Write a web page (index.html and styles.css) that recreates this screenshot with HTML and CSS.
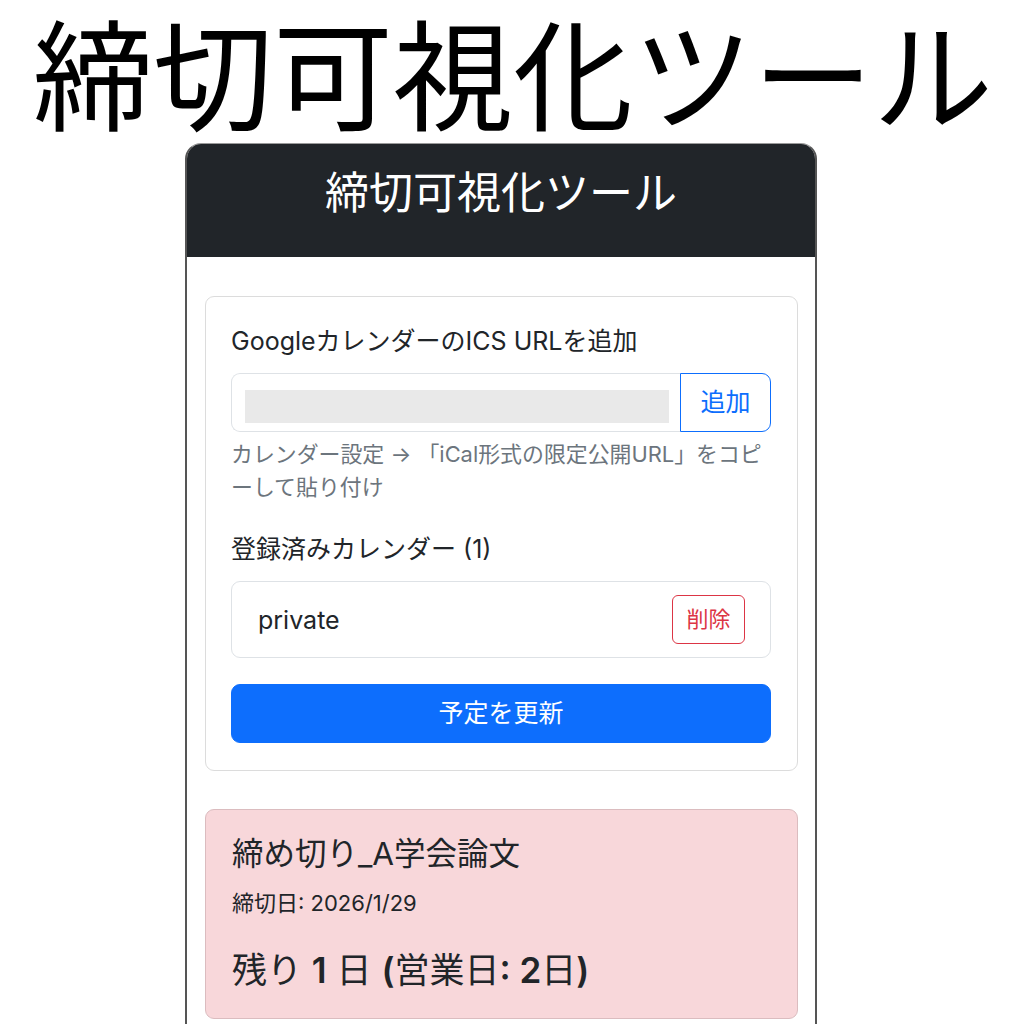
FILE: index.html
```html
<!DOCTYPE html>
<html lang="ja">
<head>
<meta charset="utf-8">
<title>締切可視化ツール</title>
<link rel="stylesheet" href="styles.css">
</head>
<body>
<h1 class="page-title">締切可視化ツール</h1>
<div class="phone">
  <header class="app-header">
    <h2 class="app-title">締切可視化ツール</h2>
  </header>
  <main class="app-main">
    <section class="card">
      <div class="card-body">
        <label class="form-label">GoogleカレンダーのICS URLを追加</label>
        <div class="input-group">
          <div class="form-control"><span class="redacted"></span></div>
          <button class="btn btn-outline-primary">追加</button>
        </div>
        <div class="form-text">カレンダー設定 → 「iCal形式の限定公開URL」をコピーして貼り付け</div>
        <h3 class="section-label">登録済みカレンダー (1)</h3>
        <ul class="list-group">
          <li class="list-item">
            <span class="cal-name">private</span>
            <button class="btn btn-sm btn-outline-danger">削除</button>
          </li>
        </ul>
        <button class="btn btn-primary btn-block">予定を更新</button>
      </div>
    </section>
    <section class="card card-danger">
      <div class="card-body">
        <h4 class="deadline-title">締め切り_A学会論文</h4>
        <p class="deadline-date">締切日: 2026/1/29</p>
        <p class="deadline-remaining">残り <b>1</b> 日 <b>(</b>営業日<b>: 2</b>日<b>)</b></p>
      </div>
    </section>
  </main>
</div>
</body>
</html>
```
FILE: styles.css
```css
* { box-sizing: border-box; }

html, body {
  margin: 0;
  padding: 0;
  height: 1024px;
  overflow: hidden;
  background: #ffffff;
}

body {
  font-family: Inter, "Noto Sans CJK JP", sans-serif;
  color: #212529;
}

.page-title {
  margin: 0;
  height: 143px;
  padding: 10px 0 0 33px;
  font-family: "Noto Sans CJK JP", sans-serif;
  font-weight: 400;
  font-size: 120px;
  line-height: 120px;
  color: #000;
  white-space: nowrap;
}

.phone {
  margin-left: 185px;
  width: 632px;
  height: 881px;
  border: 2px solid #555;
  border-top: 1px solid #9a9a9a;
  border-bottom: none;
  border-radius: 16px 16px 0 0;
  overflow: hidden;
  background: #fff;
}

.app-header {
  background: #212529;
  height: 113px;
  padding-top: 20px;
  text-align: center;
}

.app-title {
  margin: 0;
  color: #fff;
  font-family: "Noto Sans CJK JP", sans-serif;
  font-weight: 400;
  font-size: 44px;
  line-height: 1.2;
}

.app-main {
  padding: 39px 17px 0 18px;
  display: flex;
  flex-direction: column;
  gap: 38px;
}

.card {
  border: 1px solid #dcdcdc;
  border-radius: 9px;
  background: #fff;
}

.card-body {
  padding: 26px 26px 27px 25px;
  display: flex;
  flex-direction: column;
}

.form-label {
  font-size: 25px;
  line-height: 37.5px;
  margin-bottom: 12.5px;
}

.input-group {
  display: flex;
  height: 59px;
}

.form-control {
  flex: 1;
  border: 1px solid #dee2e6;
  border-right: none;
  border-radius: 9px 0 0 9px;
  padding: 16px 11px 8px 13px;
}

.redacted {
  display: block;
  height: 33px;
  background: #e9e9e9;
}

.btn {
  font-family: Inter, "Noto Sans CJK JP", sans-serif;
  font-size: 25px;
  line-height: 37.5px;
  padding: 9.5px 18.75px;
  border: 1px solid transparent;
  border-radius: 9px;
  background: transparent;
  cursor: pointer;
}

.btn-outline-primary {
  color: #0d6efd;
  border-color: #0d6efd;
  border-radius: 0 9px 9px 0;
  width: 91px;
  padding: 9.5px 0;
}

.btn-outline-danger {
  color: #dc3545;
  border-color: #dc3545;
}

.btn-sm {
  font-size: 22px;
  line-height: 33px;
  padding: 7px 13.5px;
  border-radius: 6px;
}

.btn-primary {
  background: #0d6efd;
  color: #fff;
  border-color: #0d6efd;
}

.btn-block {
  width: 100%;
  height: 59px;
}

.form-text {
  margin-top: 6px;
  font-size: 21.9px;
  line-height: 33px;
  color: #6c757d;
}

.section-label {
  margin: 27px 0 12.5px;
  font-size: 25px;
  font-weight: 400;
  line-height: 37.5px;
}

.list-group {
  list-style: none;
  margin: 0 0 26px;
  padding: 0;
}

.list-item {
  display: flex;
  align-items: center;
  justify-content: space-between;
  height: 77px;
  padding: 0 25px 0 26px;
  border: 1px solid #dee2e6;
  border-radius: 9px;
}

.cal-name {
  font-size: 25px;
}

.card-danger {
  background: #f8d7da;
  border-color: #dbbcbf;
}

.card-danger .card-body {
  padding: 25px 25px 25px 26px;
}

.deadline-title {
  margin: 0 0 12.5px;
  font-size: 31.5px;
  font-weight: 400;
  line-height: 37.5px;
}

.deadline-date {
  margin: 0 0 25px;
  font-size: 22px;
  line-height: 37.5px;
}

.deadline-remaining {
  margin: 0;
  font-size: 35px;
  font-weight: 400;
  line-height: 45px;
}

.deadline-remaining b {
  font-weight: 600;
}
```
